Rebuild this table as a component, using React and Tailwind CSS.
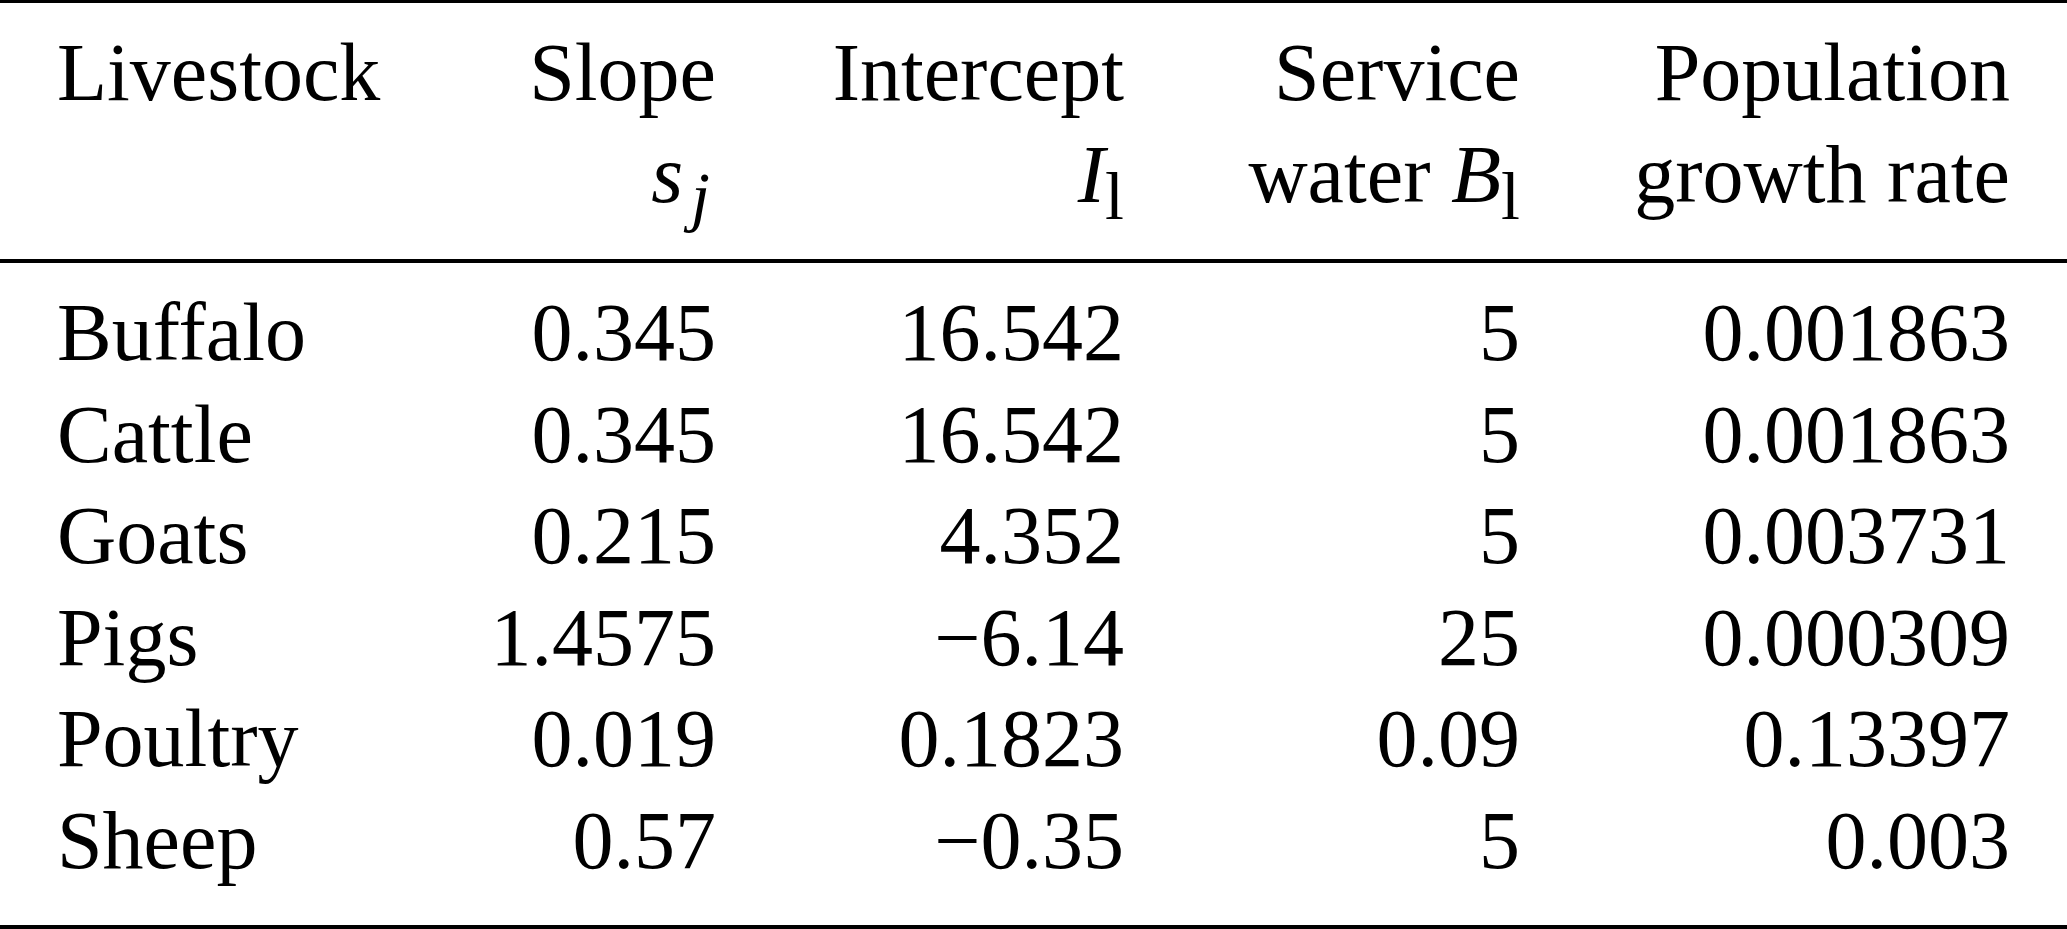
import React from "react";

const rows = [
  ["Buffalo", "0.345", "16.542", "5", "0.001863"],
  ["Cattle", "0.345", "16.542", "5", "0.001863"],
  ["Goats", "0.215", "4.352", "5", "0.003731"],
  ["Pigs", "1.4575", "\u22126.14", "25", "0.000309"],
  ["Poultry", "0.019", "0.1823", "0.09", "0.13397"],
  ["Sheep", "0.57", "\u22120.35", "5", "0.003"],
];

const cols = "grid grid-cols-[323px_336px_408px_396px_490px] px-[57px]";

function Sub({ children }) {
  return <span className="relative top-[17px] text-[68px] leading-[0] not-italic">{children}</span>;
}

export default function App() {
  return (
    <div
      className="w-[2067px] h-[929px] bg-white text-black text-[82px] leading-[101.5px] overflow-hidden"
      style={{ fontFamily: '"Liberation Serif", "Times New Roman", serif' }}
    >
      <div className="border-t-[3px] border-black">
        <div className={`${cols} pt-[19px] pb-[34px]`}>
          <div className="text-left">Livestock</div>
          <div className="text-right">
            <div>Slope</div>
            <div>
              <span className="italic">s</span>
              <span className="relative top-[17px] text-[68px] leading-[0] italic ml-[8px] mr-[6px]">j</span>
            </div>
          </div>
          <div className="text-right">
            <div>Intercept</div>
            <div>
              <span className="italic">I</span>
              <Sub>l</Sub>
            </div>
          </div>
          <div className="text-right">
            <div>Service</div>
            <div>
              water <span className="italic">B</span>
              <Sub>l</Sub>
            </div>
          </div>
          <div className="text-right">
            <div>Population</div>
            <div>growth rate</div>
          </div>
        </div>
      </div>
      <div className="border-t-[4px] border-black">
        <div className={`${cols} pt-[19px] pb-[34px]`}>
          {rows.map((r) => (
            <React.Fragment key={r[0]}>
              <div className="text-left">{r[0]}</div>
              <div className="text-right">{r[1]}</div>
              <div className="text-right">{r[2]}</div>
              <div className="text-right">{r[3]}</div>
              <div className="text-right">{r[4]}</div>
            </React.Fragment>
          ))}
        </div>
      </div>
      <div className="border-t-[4px] border-black"></div>
    </div>
  );
}
